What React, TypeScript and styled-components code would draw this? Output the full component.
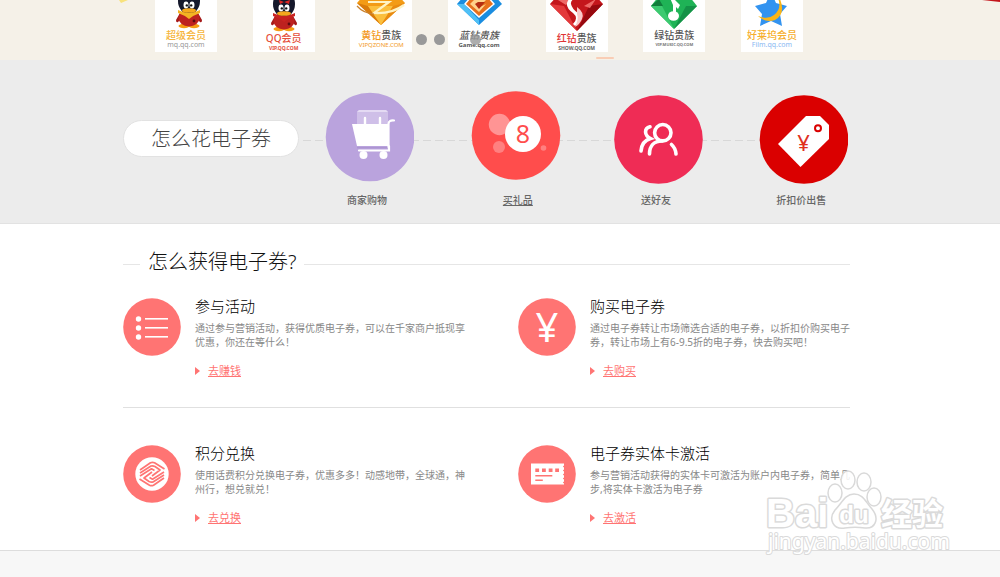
import React from "react";
import styled, { createGlobalStyle } from "styled-components";

const GlobalStyle = createGlobalStyle`
  * { box-sizing: border-box; }
  body {
    margin: 0;
    background: #f7f7f7;
    font-family: "Noto Sans", "Noto Sans CJK SC", sans-serif;
    color: #333;
  }
  h2, h3, p, ul { margin: 0; padding: 0; }
  h2, h3 { font-weight: 300; }
  ul { list-style: none; }
`;

const CORAL = "#ff7473";

const Page = styled.div`
  position: relative;
  min-height: 100vh;
  display: flex;
  flex-direction: column;
  overflow: hidden;
`;

/* partner strip */
const Banner = styled.section`
  position: relative;
  height: 60px;
  padding: 0 197px 8px 155px;
  background: #f5f1e8;
`;

const PartnerList = styled.ul`
  display: flex;
  justify-content: space-between;
`;

const PartnerCard = styled.li`
  width: 62px;
  height: 52px;
  background: #fff;
  text-align: center;
  white-space: nowrap;
`;

const PartnerArt = styled.svg<{ $tall?: boolean }>`
  display: block;
  width: 62px;
  height: ${(p) => (p.$tall ? 33 : 30)}px;
`;

const PartnerName = styled.div<{ $color: string; $slanted?: boolean }>`
  font-size: 10px;
  line-height: 11px;
  font-weight: 500;
  font-style: ${(p) => (p.$slanted ? "italic" : "normal")};
  color: ${(p) => p.$color};
`;

const NameTail = styled.span`
  color: #555;
`;

const PartnerUrl = styled.div<{ $color: string; $size: number; $strong?: boolean }>`
  font-size: ${(p) => p.$size}px;
  line-height: 8px;
  font-weight: ${(p) => (p.$strong ? 700 : 400)};
  color: ${(p) => p.$color};
`;

const SlideDots = styled.div`
  position: absolute;
  left: 416px;
  top: 34px;
  display: grid;
  grid-template-columns: repeat(4, 11px);
  gap: 7px;
`;

const SlideDot = styled.span<{ $slot: number; $dim?: boolean }>`
  grid-column: ${(p) => p.$slot};
  grid-row: 1;
  height: 11px;
  border-radius: 50%;
  background: #999;
  opacity: ${(p) => (p.$dim ? 0.8 : 1)};
`;

const Confetti = styled.svg`
  position: absolute;
  top: 0;
  left: 0;
  width: 620px;
  height: 60px;
`;

const Ribbon = styled.svg`
  position: absolute;
  top: 0;
  right: 0;
  width: 18px;
  height: 3px;
`;

/* how to spend */
const SpendSection = styled.section`
  display: flex;
  align-items: flex-start;
  padding: 30px 109px 16px 123px;
  background: #ececec;
  border-bottom: 1px solid #e2e2e2;
`;

const Pill = styled.h2`
  flex: none;
  width: 176px;
  margin-top: 30px;
  border: 1px solid #e2e2e2;
  border-radius: 19px;
  background: #fff;
  text-align: center;
  font-size: 20px;
  line-height: 35px;
  color: #444;
`;

const Steps = styled.ul`
  flex: 1;
  display: grid;
  grid-template-columns: 136fr 165fr 111fr 179fr;
  justify-items: center;
  background: repeating-linear-gradient(90deg, #d8d8d8 0 8px, transparent 8px 12px) 4px 50px / 80% 1px no-repeat;
`;

const Step = styled.li`
  display: flex;
  flex-direction: column;
  align-items: center;
  gap: 9px;
`;

const StepArt = styled.svg`
  display: block;
  width: 94px;
  height: 94px;
`;

const StepLink = styled.a<{ $active?: boolean }>`
  font-size: 10px;
  line-height: 14px;
  font-weight: 500;
  color: #666;
  text-decoration: ${(p) => (p.$active ? "underline" : "none")};
`;

/* how to get */
const GetSection = styled.section`
  padding: 24px 150px 24px 123px;
  background: #fff;
  border-bottom: 1px solid #ddd;
`;

const Heading = styled.h2`
  display: flex;
  align-items: center;
  gap: 8px;
  font-size: 20px;
  line-height: 28px;
  color: #111;
  &::before, &::after {
    content: "";
    height: 1px;
    margin-top: 4px;
    background: #e6e6e6;
  }
  &::before { width: 17px; }
  &::after { flex: 1; }
`;

const WayRow = styled.div`
  display: grid;
  grid-template-columns: 397fr 330fr;
  padding: 20px 0 28px;
  & + & {
    border-top: 1px solid #e0e0e0;
    padding: 35px 0 0;
  }
`;

const Way = styled.article`
  display: flex;
  align-items: flex-start;
  gap: 14px;
`;

const WayArt = styled.svg`
  flex: none;
  width: 58px;
  height: 58px;
  margin-top: 2px;
`;

const WayTitle = styled.h3`
  font-size: 15px;
  line-height: 20px;
  color: #000;
`;

const WayText = styled.p`
  margin-top: 5px;
  font-size: 10px;
  line-height: 14px;
  color: #888;
  white-space: nowrap;
`;

const WayLink = styled.a`
  display: flex;
  align-items: center;
  gap: 8px;
  width: fit-content;
  margin-top: 14px;
  font-size: 11px;
  line-height: 16px;
  color: ${CORAL};
  text-decoration: underline;
  &::before {
    content: "";
    border: solid transparent;
    border-width: 4px 0 4px 5px;
    border-left-color: ${CORAL};
  }
`;

const Footer = styled.footer`
  flex: 1;
  min-height: 26px;
  background: #f7f7f7;
`;

const Watermark = styled.svg`
  position: absolute;
  right: 50px;
  bottom: 17px;
  width: 186px;
  height: 94px;
  pointer-events: none;
`;

const Penguin = ({ x, y, scarf, bow }: { x: number; y: number; scarf: string; bow?: boolean }) => (
  <g transform={`translate(${x} ${y})`}>
    <ellipse cx="-5" cy="26" rx="5.5" ry="2.2" fill="#f59a13" />
    <ellipse cx="5" cy="26" rx="5.5" ry="2.2" fill="#f59a13" />
    <path d="M-9 13 L-13 20 Q-13 23 -11 22 L-8 19Z M9 13 L13 20 Q13 23 11 22 L8 19Z" fill="#a51a1a" />
    <ellipse cx="0" cy="18" rx="10.5" ry="8.5" fill="#bd211f" />
    <ellipse cx="0" cy="1" rx="11" ry="13" fill="#15182b" />
    <ellipse cx="-3" cy="5" rx="2.5" ry="3.4" fill="#fff" />
    <ellipse cx="3" cy="5" rx="2.5" ry="3.4" fill="#fff" />
    <circle cx="-2.2" cy="5.4" r="1.2" fill="#111" />
    <circle cx="2.2" cy="5.4" r="1.2" fill="#111" />
    <path d="M-11 10 Q0 16 11 10 L11 13 Q5 15 0 19 Q-5 15 -11 13Z" fill={scarf} />
    <ellipse cx="0" cy="10.5" rx="7" ry="2.3" fill="#f6a81c" />
    <circle cx="5" cy="21" r="1.4" fill="#5d0c10" />
    {bow && <path d="M-5 -3 L0 -1 L6 -3 L5 1 L0 -1 L-4 1Z" fill="#df2622" />}
  </g>
);

const partners = [
  {
    name: "超级会员", color: "#f6b53c", url: "mq.qq.com", urlColor: "#999", size: 7,
    art: <Penguin x={34} y={0} scarf="#f3b323" />,
  },
  {
    name: "QQ会员", color: "#e5503c", url: "VIP.QQ.COM", urlColor: "#e5503c", size: 5, strong: true, tall: true,
    art: <Penguin x={31} y={3} scarf="#c92320" bow />,
  },
  {
    name: "黄钻", tail: "贵族", color: "#f39a1e", url: "VIPQZONE.COM", urlColor: "#f39a1e", size: 6,
    art: (
      <g>
        <path d="M7 3 L15 -6 H47 L55 3 L31 25Z" fill="#f39b15" />
        <path d="M7 3 L18 6 L31 25Z" fill="#d97b0b" />
        <path d="M18 6 L31 25 L43 6Z" fill="#fbbf3d" />
        <path d="M43 6 L55 3 L31 25Z" fill="#e88a10" />
        <path d="M18 2 H39 L24 13 Q42 14 54 5" fill="none" stroke="#fff3c4" strokeWidth="2.200" />
        <path d="M7 6 Q13 13 24 14" fill="none" stroke="#c9822f" strokeWidth="1.200" />
      </g>
    ),
  },
  {
    name: "蓝钻贵族", color: "#555", url: "Game.qq.com", urlColor: "#555", size: 6, strong: true, slanted: true,
    art: (
      <g>
        <path d="M9 4 L16 -4 H47 L54 4 L31 25Z" fill="#1a8de0" />
        <path d="M9 4 L31 25 L31 20 L16 4Z" fill="#4fc0f6" />
        <path d="M16 4 L22 -3 H41 L47 4 L31 18Z" fill="#fff" />
        <path d="M18 4 L23 -2 H40 L45 4 L31 16Z" fill="#e6701c" />
        <path d="M22 4 L26 0 H38 L35 3 H29 L32 7 L38 4 L31 12Z" fill="#ffd28a" />
        <path d="M27 4 L30 2 H37 L31 9Z" fill="#b52e12" />
      </g>
    ),
  },
  {
    name: "红钻", tail: "贵族", color: "#e03434", url: "SHOW.QQ.COM", urlColor: "#666", size: 5, strong: true, tall: true,
    art: (
      <g>
        <path d="M4 4 L12 -5 H49 L57 4 L31 31Z" fill="#c4161c" />
        <path d="M4 4 L18 6 L31 31Z" fill="#e3393b" />
        <path d="M43 6 L57 4 L31 31Z" fill="#96090f" />
        <path d="M12 0 L20 5 L26 -2Z M38 6 L50 -1 L44 8Z" fill="#ee6a68" />
        <path d="M37 -3 Q24 -2 25 4 Q26 9 32 13 Q38 18 29 26 L27 24 Q33 18 27 13 Q20 8 21 3 Q23 -4 33 -6Z" fill="#fff" />
        <path d="M31 7 Q39 13 36 19 Q34 24 29 27 Q33 19 31 14Z" fill="#f9c9c9" />
      </g>
    ),
  },
  {
    name: "绿钻贵族", color: "#555", url: "VIP.MUSIC.QQ.COM", urlColor: "#777", size: 4, strong: true,
    art: (
      <g>
        <path d="M8 6 L16 -4 H46 L54 6 L31 29Z" fill="#1fb356" />
        <path d="M8 6 H19 L31 29Z" fill="#3cca70" />
        <path d="M43 6 H54 L31 29Z" fill="#149247" />
        <path d="M8 6 L16 -1 L20 6Z" fill="#107d3b" />
        <path d="M27 -2 H30 L37 5 L35 9 L33 7 V15 H30 V5Z" fill="#fff" />
        <ellipse cx="30.500" cy="16" rx="5.500" ry="4.800" fill="#fff" />
      </g>
    ),
  },
  {
    name: "好莱坞会员", color: "#f6ae2d", url: "Film.qq.com", urlColor: "#8ab8f2", size: 7,
    art: (
      <g>
        <path d="M30 -8 L35 3 L46 6 L39 14 L41 26 L30 21 L19 26 L21 14 L14 6 L25 3Z" fill="#3293f0" />
        <path d="M36 -4 Q42 8 33 15 Q27 20 17 16 Q24 23 34 20 Q45 14 39 -1Z" fill="#fbb516" />
      </g>
    ),
  },
];

const steps = [
  {
    label: "商家购物",
    art: (
      <g>
        <circle cx="50" cy="47" r="44.300" fill="#baa3dd" />
        <path d="M37 22 L39 20 H66 L68 22 V35 H37Z" fill="#cfbfe8" />
        <path d="M37 22 L39 20 H66 L68 22Z" fill="#e4daf3" />
        <path d="M32 34 H68 V56 H37Z" fill="#fff" />
        <path d="M45 28 V35 M60 28 V35" stroke="#fff" strokeWidth="2.400" strokeLinecap="round" />
        <path d="M68.500 57 V34 Q68.500 30 74 30.500 M39 60.500 H69 V56" fill="none" stroke="#fff" strokeWidth="2.200" strokeLinecap="round" />
        <path d="M37 57.800 H67" stroke="#a78fce" strokeWidth="1" />
        <circle cx="43.500" cy="65" r="4" fill="#fff" />
        <circle cx="63.500" cy="65" r="4" fill="#fff" />
      </g>
    ),
  },
  {
    label: "买礼品",
    active: true,
    art: (
      <g>
        <circle cx="45" cy="45.500" r="44.300" fill="#ff4d4c" />
        <circle cx="28.500" cy="34.500" r="10.700" fill="#ff9494" />
        <circle cx="28" cy="57" r="6" fill="#ff8080" />
        <circle cx="72.500" cy="58" r="2.800" fill="#ff8080" />
        <circle cx="52" cy="44" r="18" fill="#fff" />
        <text x="52" y="53" textAnchor="middle" fontSize="25" fontFamily="Noto Sans, sans-serif" fill="#ff4d4c">8</text>
      </g>
    ),
  },
  {
    label: "送好友",
    art: (
      <g>
        <circle cx="49.500" cy="49.500" r="44.300" fill="#ef2c55" />
        <g fill="none" stroke="#fff" strokeWidth="3.600" strokeLinecap="round">
          <circle cx="53.800" cy="42.700" r="8.200" />
          <path d="M40.500 64 C40.500 56 45 51 53 51" />
          <path d="M62.500 54.500 Q66.500 58 67 64" />
          <path d="M41 36.800 C35 38.500 35 45 41.500 48.600 C35 50.500 32.500 55 32 61" />
        </g>
      </g>
    ),
  },
  {
    label: "折扣价出售",
    art: (
      <g>
        <circle cx="50" cy="49.500" r="44.300" fill="#da0000" />
        <path d="M52 26 H66 L75 35 V49 L46.500 77 L24 54Z" fill="#fff" />
        <circle cx="64" cy="38.300" r="3" fill="#fff" stroke="#da0000" strokeWidth="2" />
        <text x="49.500" y="61" textAnchor="middle" fontSize="22" fontFamily="Noto Sans, sans-serif" fill="#e0301e">¥</text>
      </g>
    ),
  },
];

const ListIcon = (
  <g fill="#fff">
    {[21, 30, 39].map((y) => (
      <g key={y}>
        <circle cx="15.500" cy={y} r="2.700" />
        <rect x="22" y={y - 1} width="23" height="1.600" />
      </g>
    ))}
  </g>
);

const YuanIcon = (
  <text x="29" y="44" textAnchor="middle" fontSize="40" fontFamily="Noto Sans, sans-serif" fill="#fff">¥</text>
);

const Ribbons = (
  <>
    <path d="M17 25 L27.500 17.800 Q29.500 16.800 31.500 17.800 L41.500 24" />
    <path d="M17 28 L28 21 Q30 20.500 32 21.500 L37 25 L29 31" />
    <path d="M17 31 L28.500 23.800 L31.500 25.500" />
  </>
);

const PointsIcon = (
  <g>
    <circle cx="29" cy="29" r="16.700" fill="#fff" />
    <g fill="none" stroke={CORAL} strokeWidth="1.700" strokeLinejoin="round">
      <g>{Ribbons}</g>
      <g transform="rotate(180 29 29)">{Ribbons}</g>
    </g>
  </g>
);

const CardIcon = (
  <g>
    <path d="M13 18.500 H46 V20.500 L44.800 21.500 L46 22.500 V24.500 L44.800 25.500 L46 26.500 V28.500 L44.800 29.500 L46 30.500 V32.500 L44.800 33.500 L46 34.500 V36.500 L44.800 37.500 L46 38.500 V39.500 H13Z" fill="#fff" />
    <path d="M17.300 23.500 h3.800 v3.500 h-3.800z M24 23.500 h3.800 v3.500 h-3.800z M30.700 23.500 h3.800 v3.500 h-3.800z M37.200 23.500 h3.800 v3.500 h-3.800z M17.300 30 h17 v1.500 h-17z M17.300 34.500 h7.500 v1.500 h-7.500z" fill={CORAL} />
  </g>
);

const rows = [
  [
    { title: "参与活动", lines: ["通过参与营销活动，获得优质电子券，可以在千家商户抵现享", "优惠，你还在等什么！"], link: "去赚钱", icon: ListIcon },
    { title: "购买电子券", lines: ["通过电子券转让市场筛选合适的电子券，以折扣价购买电子", "券，转让市场上有6-9.5折的电子券，快去购买吧！"], link: "去购买", icon: YuanIcon },
  ],
  [
    { title: "积分兑换", lines: ["使用话费积分兑换电子券，优惠多多！动感地带，全球通，神", "州行，想兑就兑！"], link: "去兑换", icon: PointsIcon },
    { title: "电子券实体卡激活", lines: ["参与营销活动获得的实体卡可激活为账户内电子券，简单几", "步,将实体卡激活为电子券"], link: "去激活", icon: CardIcon },
  ],
];

export default function App() {
  return (
    <Page lang="zh-CN">
      <GlobalStyle />
      <Banner>
        <PartnerList>
          {partners.map((p) => (
            <PartnerCard key={p.url}>
              <PartnerArt viewBox={p.tall ? "0 0 62 33" : "0 0 62 30"} $tall={p.tall}>{p.art}</PartnerArt>
              <PartnerName $color={p.color} $slanted={p.slanted}>
                {p.name}
                {p.tail && <NameTail>{p.tail}</NameTail>}
              </PartnerName>
              <PartnerUrl $color={p.urlColor} $size={p.size} $strong={p.strong}>{p.url}</PartnerUrl>
            </PartnerCard>
          ))}
        </PartnerList>
        <Confetti viewBox="0 0 620 60">
          <path d="M119 0 H128 L121 3Z" fill="#f8e27c" />
          <rect x="596" y="57" width="18" height="2" rx="1" fill="#f9cdb5" />
        </Confetti>
        <Ribbon viewBox="0 0 18 3">
          <path d="M0 0 H18 V2Z" fill="#c4161c" />
        </Ribbon>
        <SlideDots>
          <SlideDot $slot={1} />
          <SlideDot $slot={2} />
          <SlideDot $slot={4} $dim />
        </SlideDots>
      </Banner>

      <SpendSection>
        <Pill>怎么花电子券</Pill>
        <Steps>
          {steps.map((s) => (
            <Step key={s.label}>
              <StepArt viewBox="0 0 94 94">{s.art}</StepArt>
              <StepLink href="#" $active={s.active}>{s.label}</StepLink>
            </Step>
          ))}
        </Steps>
      </SpendSection>

      <GetSection>
        <Heading>怎么获得电子券?</Heading>
        {rows.map((row, i) => (
          <WayRow key={i}>
            {row.map((w) => (
              <Way key={w.title}>
                <WayArt viewBox="0 0 58 58">
                  <circle cx="29" cy="29" r="28.800" fill={CORAL} />
                  {w.icon}
                </WayArt>
                <div>
                  <WayTitle>{w.title}</WayTitle>
                  <WayText>
                    {w.lines[0]}
                    <br />
                    {w.lines[1]}
                  </WayText>
                  <WayLink href="#">{w.link}</WayLink>
                </div>
              </Way>
            ))}
          </WayRow>
        ))}
      </GetSection>
      <Footer />

      <Watermark viewBox="0 0 186 94">
        <g fill="#fff" stroke="#d9d9d9" strokeWidth="1.500" fillOpacity="0.850">
          <ellipse cx="71" cy="27" rx="7" ry="9" />
          <ellipse cx="84" cy="14" rx="7" ry="9" />
          <ellipse cx="100" cy="16" rx="7" ry="9" />
          <ellipse cx="110" cy="31" rx="7" ry="9" />
          <path d="M90 28 C99 28 101 35 108 43 C116 53 111 63 101 62 C94 61 88 61 81 62 C69 64 64 53 71 44 C78 37 81 28 90 28Z" />
        </g>
        <g fill="#fff" stroke="#dadada" strokeWidth="3" paintOrder="stroke" strokeLinejoin="round">
          <text x="2" y="61" fontSize="40" fontWeight="700" fontFamily="Liberation Sans, sans-serif">Bai</text>
          <text x="90" y="57" textAnchor="middle" fontSize="24" fontWeight="700" fontFamily="Liberation Sans, sans-serif">du</text>
          <text x="117" y="59" fontSize="31" fontWeight="700" fontFamily="Noto Sans CJK SC, sans-serif">经验</text>
          <text x="4" y="83" fontSize="21" strokeWidth="2" fontFamily="Noto Sans, sans-serif">jingyan.baidu.com</text>
        </g>
      </Watermark>
    </Page>
  );
}
